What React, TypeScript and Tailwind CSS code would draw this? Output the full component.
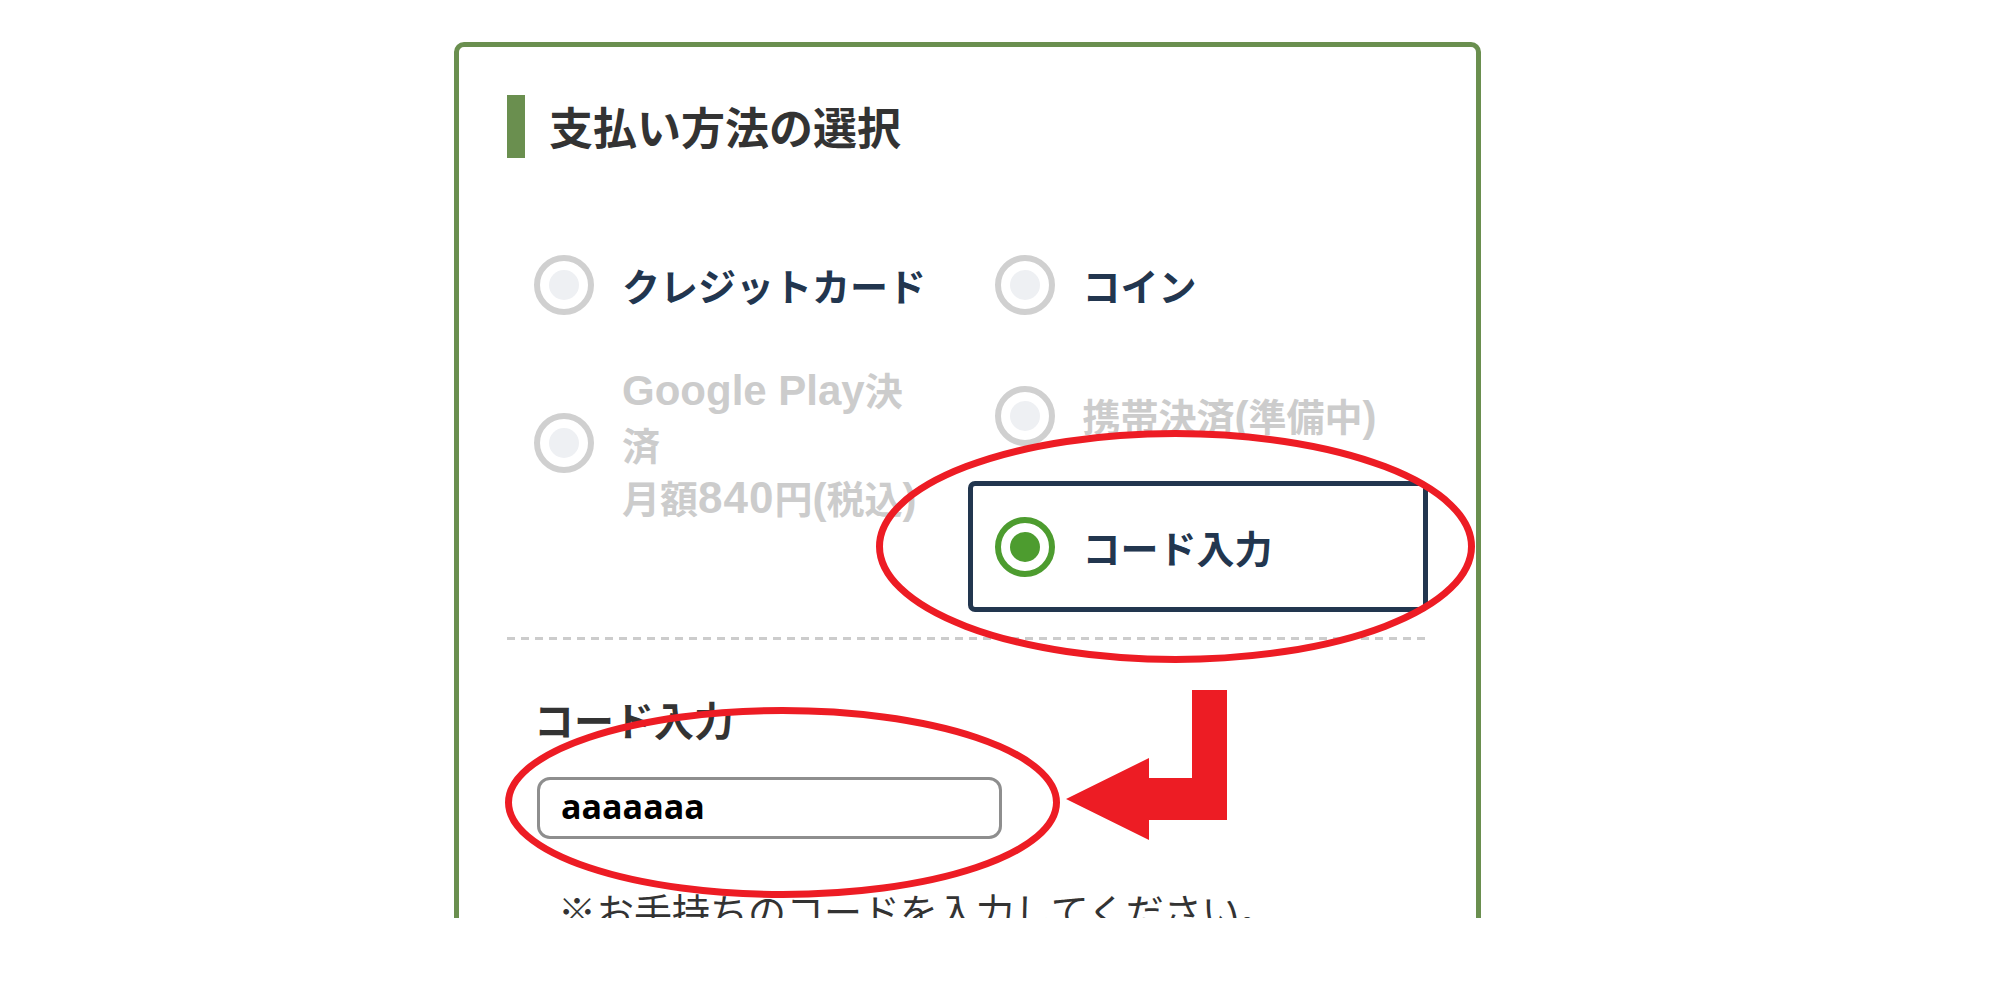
import React from "react";

type Opt = {
  label: React.ReactNode;
  state: "normal" | "disabled" | "selected";
  h: string;
};

function Radio({ state }: { state: Opt["state"] }) {
  if (state === "selected") {
    return (
      <div className="w-[60px] h-[60px] shrink-0 rounded-full border-[6px] border-[#4d9c2f] bg-white flex items-center justify-center">
        <div className="w-[30px] h-[30px] rounded-full bg-[#4d9c2f]" />
      </div>
    );
  }
  return (
    <div className="w-[60px] h-[60px] shrink-0 rounded-full border-[6px] border-[#d0d0d0] bg-white flex items-center justify-center">
      <div className="w-[30px] h-[30px] rounded-full bg-[#eef0f3]" />
    </div>
  );
}

function Lat({ children, wide }: { children: React.ReactNode; wide?: boolean }) {
  return (
    <span
      className={`font-['Liberation_Sans',sans-serif] leading-[53px] ${
        wide ? "text-[44px] tracking-[1px]" : "text-[42px]"
      }`}
    >
      {children}
    </span>
  );
}

function Option({ opt }: { opt: Opt }) {
  const box =
    opt.state === "selected" ? "border-[#22364f]" : "border-transparent";
  const text =
    opt.state === "disabled" ? "text-[#cccccc]" : "text-[#22364f]";
  return (
    <div
      className={`${opt.h} border-[5px] ${box} rounded-[7px] pl-[22px] flex items-center gap-[28px]`}
    >
      <Radio state={opt.state} />
      <div className={`text-[38px] leading-[53px] font-bold ${text}`}>
        {opt.label}
      </div>
    </div>
  );
}

export default function App() {
  return (
    <div className="relative w-[1994px] h-[1000px] bg-white overflow-hidden font-['Noto_Sans_CJK_JP','Noto_Sans',sans-serif]">
      <div className="h-[918px] overflow-hidden">
        <div className="ml-[454px] mt-[42px] w-[1027px] border-[5px] border-[#6a8f4f] rounded-[10px] px-[48px] pt-[48px] pb-[120px]">
          {/* heading */}
          <div className="flex items-center gap-[24px] h-[63px]">
            <div className="w-[18px] h-[63px] bg-[#6a8f4f]" />
            <h2 className="text-[44px] leading-[63px] font-bold text-[#333333]">
              支払い方法の選択
            </h2>
          </div>

          {/* options */}
          <div className="mt-[61px] grid grid-cols-2">
            <div className="flex flex-col">
              <Option opt={{ label: "クレジットカード", state: "normal", h: "h-[131px]" }} />
              <Option
                opt={{
                  label: (
                    <>
                      <Lat>Google Play</Lat>決
                      <br />
                      済
                      <br />
                      月額<Lat wide>840</Lat>円<Lat>(</Lat>税込<Lat>)</Lat>
                    </>
                  ),
                  state: "disabled",
                  h: "h-[186px]",
                }}
              />
            </div>
            <div className="flex flex-col">
              <Option opt={{ label: "コイン", state: "normal", h: "h-[131px]" }} />
              <Option
                opt={{
                  label: (
                    <>
                      携帯決済<Lat>(</Lat>準備中<Lat>)</Lat>
                    </>
                  ),
                  state: "disabled",
                  h: "h-[131px]",
                }}
              />
              <Option opt={{ label: "コード入力", state: "selected", h: "h-[131px]" }} />
            </div>
          </div>

          {/* dashed divider */}
          <div className="mt-[25px] h-[3px] bg-[repeating-linear-gradient(to_right,#cccccc_0px,#cccccc_8px,transparent_8px,transparent_14px)]" />

          {/* code input section */}
          <div className="mt-[51px] ml-[27px] text-[40px] leading-[56px] font-bold text-[#333333]">
            コード入力
          </div>
          <input
            readOnly
            value="aaaaaaa"
            className="block mt-[30px] ml-[30px] w-[465px] h-[62px] border-[3px] border-[#8e8e8e] rounded-[13px] pl-[21px] pb-[4px] bg-white text-black text-[34px] font-bold font-['Open_Sans',sans-serif] outline-none"
          />
          <p className="mt-[44px] ml-[51px] text-[38px] leading-[53px] text-[#333333]">
            ※お手持ちのコードを入力してください。
          </p>
        </div>
      </div>

      {/* annotation overlay */}
      <svg
        className="absolute left-0 top-0 pointer-events-none"
        width="1994"
        height="1000"
        viewBox="0 0 1994 1000"
      >
        <ellipse
          cx="1175.5"
          cy="546.5"
          rx="296"
          ry="113"
          fill="none"
          stroke="#ed1c24"
          strokeWidth="7"
        />
        <ellipse
          cx="782.5"
          cy="802.5"
          rx="274"
          ry="92"
          fill="none"
          stroke="#ed1c24"
          strokeWidth="7"
        />
        <polygon
          points="1192,690 1227,690 1227,820 1149,820 1149,840 1066,799 1149,758 1149,778 1192,778"
          fill="#ed1c24"
        />
      </svg>
    </div>
  );
}
